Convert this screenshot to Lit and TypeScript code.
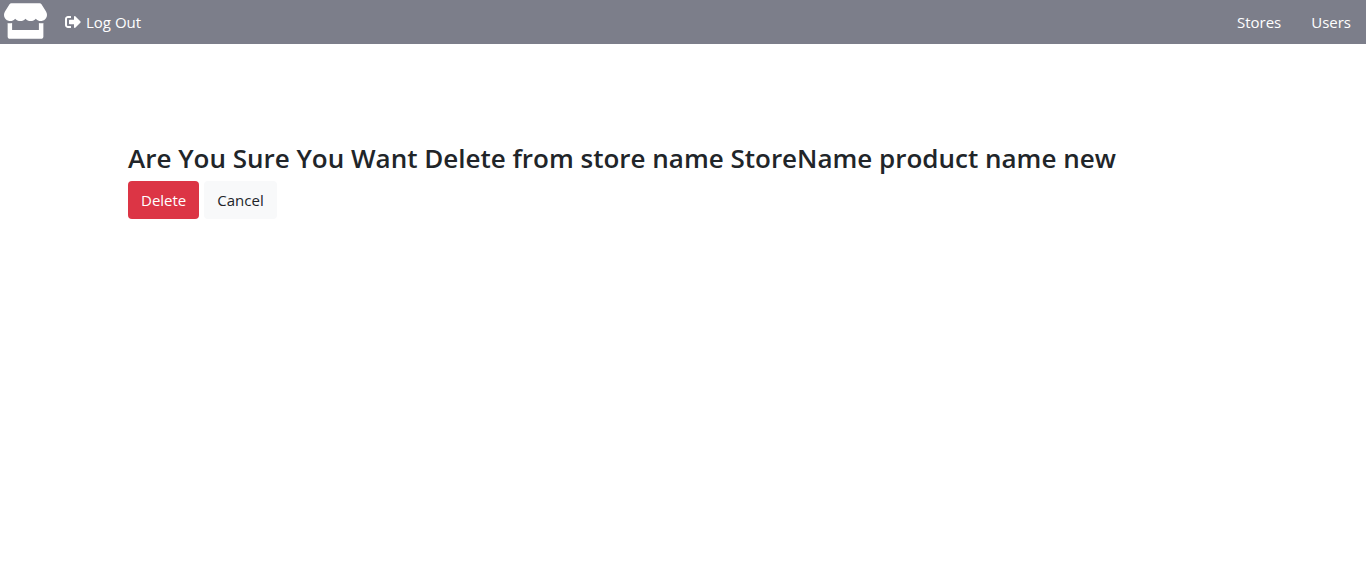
import { LitElement, html, css } from "lit";
import { customElement } from "lit/decorators.js";

@customElement("app-root")
export class AppRoot extends LitElement {
  static styles = css`
    :host {
      display: block;
      font: 400 15px/24px "Segoe UI", "Open Sans", "Noto Sans", sans-serif;
      color: #212529;
    }
    .navbar {
      display: flex;
      align-items: center;
      justify-content: space-between;
      height: 44px;
      padding: 0 15px 0 4px;
      box-sizing: border-box;
      background: #7c7e8a;
    }
    .group {
      display: flex;
      align-items: center;
      gap: 18px;
    }
    .links {
      gap: 30px;
    }
    .navbar a {
      display: flex;
      align-items: center;
      gap: 5px;
      color: #fff;
      text-decoration: none;
    }
    .brand {
      padding-bottom: 2px;
    }
    svg {
      display: block;
      fill: currentColor;
    }
    main {
      padding: 97px 128px 0;
    }
    h3 {
      margin: 0 0 6px;
      font-size: 26px;
      line-height: 34px;
      font-weight: 600;
    }
    .actions {
      display: flex;
      gap: 5px;
    }
    button {
      padding: 6px 12px;
      border: 1px solid transparent;
      border-radius: 4px;
      font: inherit;
      cursor: pointer;
    }
    .danger {
      background: #dc3545;
      color: #fff;
    }
    .light {
      background: #f8f9fa;
      color: #212529;
    }
  `;

  render() {
    return html`
      <nav class="navbar">
        <div class="group">
          <a class="brand" href="#" aria-label="Home">
            <svg width="43" height="36" viewBox="0 0 616 512" aria-hidden="true">
              <path d="M602 118.6L537.1 15C531.3 5.7 521 0 510 0H106C95 0 84.7 5.7 78.9 15L14 118.6c-33.5 53.5-3.8 127.9 58.8 136.4 4.5.6 9.1.9 13.7.9 29.6 0 55.8-13 73.8-33.1 18 20.1 44.3 33.1 73.8 33.1 29.6 0 55.8-13 73.8-33.1 18 20.1 44.3 33.1 73.8 33.1 29.6 0 55.8-13 73.8-33.1 18.1 20.1 44.3 33.1 73.8 33.1 4.7 0 9.2-.3 13.7-.9 62.8-8.4 92.6-82.8 59-136.4zM529.5 288c-10 0-19.9-1.5-29.5-3.8V384H116v-99.8c-9.6 2.2-19.5 3.8-29.5 3.8-6 0-12.1-.4-18-1.2-5.6-.8-11.1-2.1-16.4-3.6V480c0 17.7 14.3 32 32 32h448c17.7 0 32-14.3 32-32V283.2c-5.4 1.6-10.8 2.9-16.4 3.6-6.1.8-12.1 1.2-18.2 1.2z"/>
            </svg>
          </a>
          <a href="#">
            <svg width="16" height="16" viewBox="0 0 512 512" aria-hidden="true">
              <path d="M497 273L329 441c-15 15-41 4.5-41-17v-96H152c-13.3 0-24-10.7-24-24v-96c0-13.3 10.7-24 24-24h136V88c0-21.4 25.9-32 41-17l168 168c9.3 9.4 9.3 24.6 0 34zM192 436v-40c0-6.6-5.4-12-12-12H96c-17.7 0-32-14.3-32-32V160c0-17.7 14.3-32 32-32h84c6.6 0 12-5.4 12-12V76c0-6.6-5.4-12-12-12H96c-53 0-96 43-96 96v192c0 53 43 96 96 96h84c6.6 0 12-5.4 12-12z"/>
            </svg>
            <span>Log Out</span>
          </a>
        </div>
        <div class="group links">
          <a href="#">Stores</a>
          <a href="#">Users</a>
        </div>
      </nav>
      <main>
        <h3>Are You Sure You Want Delete from store name StoreName product name new</h3>
        <div class="actions">
          <button class="danger" type="button">Delete</button>
          <button class="light" type="button">Cancel</button>
        </div>
      </main>
    `;
  }
}
